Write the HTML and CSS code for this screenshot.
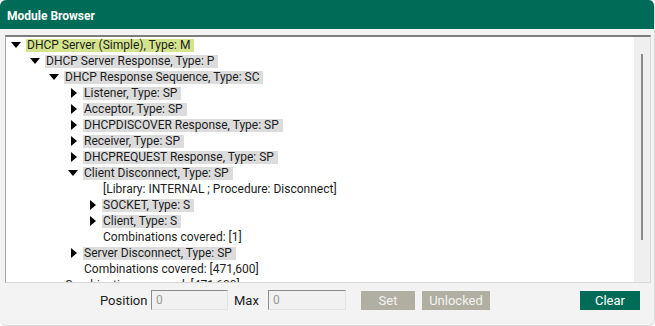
FILE: index.html
```html
<!DOCTYPE html>
<html lang="en">
<head>
  <meta charset="UTF-8">
  <title>Module Browser</title>
  <link rel="stylesheet" href="styles.css">
</head>
<body>
  <div class="window">
    <!-- Title bar -->
    <div class="titlebar">Module Browser</div>

    <div class="content">
      <!-- Tree panel -->
      <div class="tree-panel">
        <div class="tree">
          <div class="row lvl-0"><span class="caret down"></span><span class="label selected">DHCP Server (Simple), Type: M</span></div>
          <div class="row lvl-1"><span class="caret down"></span><span class="label">DHCP Server Response, Type: P</span></div>
          <div class="row lvl-2"><span class="caret down"></span><span class="label">DHCP Response Sequence, Type: SC</span></div>
          <div class="row lvl-3"><span class="caret right"></span><span class="label">Listener, Type: SP</span></div>
          <div class="row lvl-3"><span class="caret right"></span><span class="label">Acceptor, Type: SP</span></div>
          <div class="row lvl-3"><span class="caret right"></span><span class="label">DHCPDISCOVER Response, Type: SP</span></div>
          <div class="row lvl-3"><span class="caret right"></span><span class="label">Receiver, Type: SP</span></div>
          <div class="row lvl-3"><span class="caret right"></span><span class="label">DHCPREQUEST Response, Type: SP</span></div>
          <div class="row lvl-3"><span class="caret down"></span><span class="label">Client Disconnect, Type: SP</span></div>
          <div class="row lvl-4"><span class="caret"></span><span class="info">[Library: INTERNAL ; Procedure: Disconnect]</span></div>
          <div class="row lvl-4"><span class="caret right"></span><span class="label">SOCKET, Type: S</span></div>
          <div class="row lvl-4"><span class="caret right"></span><span class="label">Client, Type: S</span></div>
          <div class="row lvl-4"><span class="caret"></span><span class="info">Combinations covered: [1]</span></div>
          <div class="row lvl-3"><span class="caret right"></span><span class="label">Server Disconnect, Type: SP</span></div>
          <div class="row lvl-3"><span class="caret"></span><span class="info">Combinations covered: [471,600]</span></div>
          <div class="row lvl-2"><span class="caret"></span><span class="info">Combinations covered: [471,600]</span></div>
        </div>
        <div class="scrollbar"><div class="thumb"></div></div>
      </div>

      <!-- Bottom controls -->
      <div class="controls">
        <span class="field-label pos-label">Position</span>
        <input class="field" type="text" placeholder="0">
        <span class="field-label max-label">Max</span>
        <input class="field field-max" type="text" placeholder="0">
        <button class="btn btn-muted btn-set">Set</button>
        <button class="btn btn-muted btn-unlocked">Unlocked</button>
        <button class="btn btn-primary">Clear</button>
      </div>
    </div>
  </div>
</body>
</html>
```

FILE: styles.css
```css
/* General page */
body {
  margin: 0;
  padding: 0;
  background: #ffffff;
  font-family: Roboto, "Liberation Sans", Arial, sans-serif;
  color: #1c1c1c;
}

.window {
  width: 655px;
  height: 326px;
  box-sizing: border-box;
  border-radius: 6px;
  overflow: hidden;
  background: #f3f3f3;
  border-right: 1px solid #dcdcdc;
  border-bottom: 1px solid #dcdcdc;
  display: flex;
  flex-direction: column;
}

/* Title bar */
.titlebar {
  height: 25px;
  padding: 4px 0 0 7px;
  line-height: 25px;
  background: #006b56;
  color: #ffffff;
  font-size: 12px;
  font-weight: bold;
}

.content {
  flex: 1;
  display: flex;
  flex-direction: column;
  padding: 6px 3px 0 5px;
}

/* Tree panel */
.tree-panel {
  height: 248px;
  box-sizing: border-box;
  display: flex;
  background: #ffffff;
  border: 1px solid #d8d8d8;
  border-left-color: #a8a8a8;
  border-top: 2px solid #7c7c7c;
}

.tree {
  flex: 1;
  overflow: hidden;
  font-size: 12px;
}

.row {
  height: 16px;
  display: flex;
  align-items: center;
  white-space: nowrap;
}

.lvl-0 { padding-left: 1px; }
.lvl-1 { padding-left: 20px; }
.lvl-2 { padding-left: 39px; }
.lvl-3 { padding-left: 58px; }
.lvl-4 { padding-left: 77px; }

.caret {
  width: 19px;
  height: 16px;
  flex: none;
  position: relative;
}

.caret.down::before {
  content: "";
  position: absolute;
  left: 4px;
  top: 5px;
  border-left: 5px solid transparent;
  border-right: 5px solid transparent;
  border-top: 6px solid #000000;
}

.caret.right::before {
  content: "";
  position: absolute;
  left: 7px;
  top: 3px;
  border-top: 5px solid transparent;
  border-bottom: 5px solid transparent;
  border-left: 6px solid #000000;
}

.label {
  height: 13px;
  line-height: 13px;
  padding: 0 4px 0 1px;
  background: #dcdcdc;
}

.label.selected {
  background: #d4e48c;
}

.info {
  line-height: 13px;
  padding-left: 1px;
}

/* Scrollbar */
.scrollbar {
  width: 16px;
  flex: none;
  background: #efefef;
}

.thumb {
  width: 2px;
  height: 186px;
  margin: 17px 0 0 7px;
  background: #8a8a8a;
}

/* Bottom controls */
.controls {
  display: flex;
  align-items: center;
  height: 20px;
  margin-top: 7px;
  padding-left: 95px;
  padding-right: 11px;
  font-size: 13px;
}

.field-label {
  color: #1c1c1c;
}

.pos-label {
  width: 51px;
}

.max-label {
  width: 34px;
  margin-left: 6px;
}

.field {
  width: 77px;
  height: 20px;
  box-sizing: border-box;
  padding: 0 4px;
  margin: 0;
  font-family: inherit;
  font-size: 12px;
  background: #f1f1f1;
  border: 1px solid #e2e2e2;
  border-top-color: #8c8c8c;
  border-left-color: #8c8c8c;
}

.field::placeholder {
  color: #9a9a9a;
}

.field-max {
  width: 78px;
}

.btn {
  height: 19px;
  padding: 0;
  border: none;
  font-family: inherit;
  font-size: 13px;
  cursor: pointer;
}

.btn-muted {
  background: #b1afa1;
  color: #f4f4f4;
}

.btn-set {
  width: 54px;
  margin-left: 15px;
}

.btn-unlocked {
  width: 68px;
  margin-left: 7px;
}

.btn-primary {
  width: 60px;
  margin-left: auto;
  background: #006b56;
  color: #ffffff;
}
```
